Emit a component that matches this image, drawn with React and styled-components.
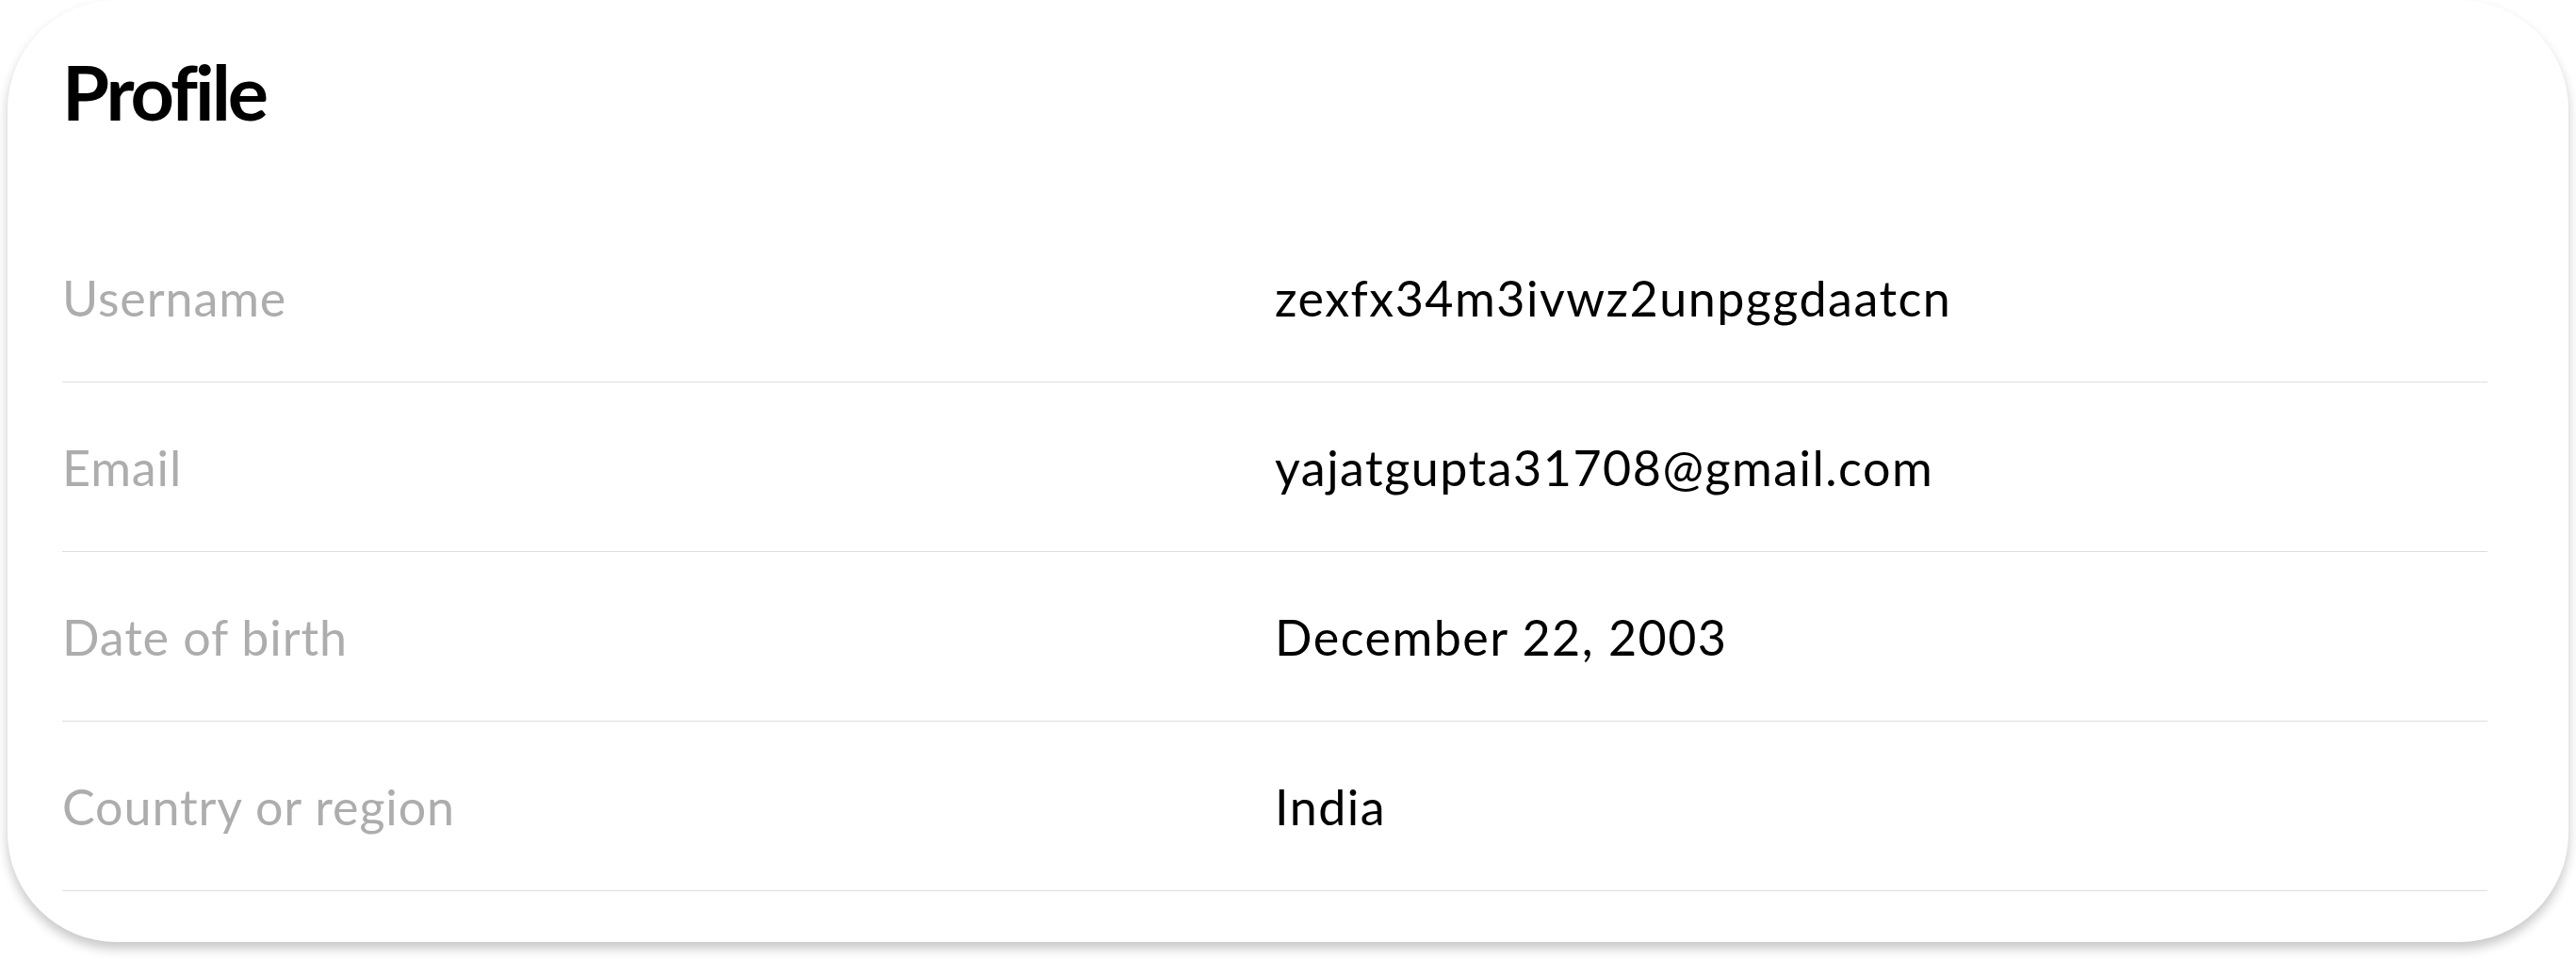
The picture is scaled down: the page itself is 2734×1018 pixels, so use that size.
import React from "react";
import styled, { createGlobalStyle } from "styled-components";

const GlobalStyle = createGlobalStyle`
  html, body {
    margin: 0;
    padding: 0;
    background: #ffffff;
  }
  body {
    font-family: Lato, "Liberation Sans", sans-serif;
    color: #000;
  }
`;

const profile = [
  { label: "Username", value: "zexfx34m3ivwz2unpggdaatcn" },
  { label: "Email", value: "yajatgupta31708@gmail.com" },
  { label: "Date of birth", value: "December 22, 2003" },
  { label: "Country or region", value: "India" },
];

const StyledPage = styled.div`
  padding: 0 8px 18px;
`;

const StyledCard = styled.section`
  box-sizing: border-box;
  height: 1000px;
  background: #fff;
  border-radius: 116px;
  box-shadow: 0 7px 12px rgba(0, 0, 0, 0.22);
  padding: 0 86px 0 58px;
  display: flex;
  flex-direction: column;
`;

const StyledTitle = styled.h1`
  margin: 56px 0 89px;
  font-size: 81px;
  line-height: 1;
  font-weight: 700;
  letter-spacing: -3px;
`;

const StyledRow = styled.div`
  display: grid;
  grid-template-columns: 1fr 1fr;
  align-items: center;
  height: 179px;
  border-bottom: 1px solid #dedede;
  font-size: 52px;
  line-height: 1;
`;

const StyledLabel = styled.span`
  color: #adadad;
  letter-spacing: 0.9px;
`;

const StyledValue = styled.span`
  color: #000;
  letter-spacing: 1.5px;
`;

export default function App() {
  return (
    <StyledPage>
      <GlobalStyle />
      <StyledCard>
        <StyledTitle>Profile</StyledTitle>
        {profile.map((item) => (
          <StyledRow key={item.label}>
            <StyledLabel>{item.label}</StyledLabel>
            <StyledValue>{item.value}</StyledValue>
          </StyledRow>
        ))}
      </StyledCard>
    </StyledPage>
  );
}
